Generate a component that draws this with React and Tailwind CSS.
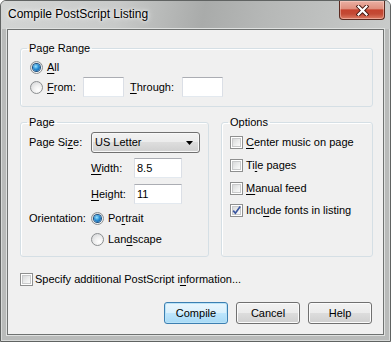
import React from "react";

const U = ({ children }) => <span className="underline underline-offset-[2px]">{children}</span>;

function Radio({ checked }) {
  return (
    <span className="relative inline-flex w-[13px] h-[13px] shrink-0 items-center justify-center rounded-full border border-[#8b8e90] bg-[radial-gradient(circle_at_65%_70%,#ffffff_0%,#f0f0f0_40%,#cfd1d3_100%)]">
      {checked && (
        <span className="w-[7px] h-[7px] rounded-full bg-[radial-gradient(circle_at_40%_35%,#9be4ff_0%,#2a8fd6_45%,#0c4e8e_100%)] shadow-[0_0_0_1px_#1b4f7f]" />
      )}
    </span>
  );
}

function Check({ checked }) {
  return (
    <span className="relative inline-flex w-[13px] h-[13px] shrink-0 items-center justify-center border border-[#8e8f8f] bg-white">
      <span className="w-[9px] h-[9px] border border-[#c8c9ca] bg-[linear-gradient(135deg,#d8d9da_0%,#eceded_55%,#fbfbfb_100%)] flex items-center justify-center">
        {checked && (
          <svg width="9" height="9" viewBox="0 0 9 9" className="overflow-visible">
            <path d="M1.2 4.6 L3.4 7.2 L8.2 0.6" fill="none" stroke="#3b57a0" strokeWidth="1.7" strokeLinejoin="miter" />
          </svg>
        )}
      </span>
    </span>
  );
}

function Field({ w, value }) {
  return (
    <div
      className="h-[20px] bg-white border border-[#e3e9ef] border-t-[#abadb3] border-l-[#dbdfe6] border-r-[#dbdfe6] flex items-center pl-[2px]"
      style={{ width: w }}
    >
      {value}
    </div>
  );
}

function Group({ title, className, inner, children }) {
  return (
    <fieldset className={"border border-[#d5dfe5] rounded-[3px] shadow-[inset_1px_1px_0_#fff] " + (className || "")}>
      <legend className="ml-[6px] px-[2px] leading-[13px]">{title}</legend>
      <div className={inner}>{children}</div>
    </fieldset>
  );
}

function Button({ children, def }) {
  return (
    <div
      className={
        "w-[64px] h-[22px] rounded-[3px] flex items-center justify-center " +
        (def
          ? "border border-[#3c7fb1] bg-[linear-gradient(#eaf6fd_0%,#d9f0fc_50%,#bee6fd_50%,#a7d9f5_100%)] shadow-[inset_0_0_0_1px_#b9e3f8]"
          : "border border-[#707070] bg-[linear-gradient(#f2f2f2_0%,#ebebeb_50%,#dddddd_50%,#cfcfcf_100%)] shadow-[inset_0_0_0_1px_#fbfbfb]")
      }
    >
      {children}
    </div>
  );
}

export default function App() {
  return (
    <div className="w-[391px] h-[342px] flex flex-col border border-[#606362] rounded-t-[6px] overflow-hidden bg-[#b9bbba] text-[11px] text-black font-['Liberation_Sans',Arial,sans-serif] shadow-[inset_0_0_0_1px_#d8dad9]">
      {/* title bar */}
      <div className="h-[28px] flex items-start bg-[linear-gradient(100deg,#d3d5d4_0%,#c8cac9_30%,#a9abaa_52%,#b6b8b7_68%,#c9cbca_100%)]">
        <span className="ml-[7px] mt-[6px] text-[12px] leading-[15px] [text-shadow:0_0_6px_#ffffff,0_0_3px_#ffffff]">
          Compile PostScript Listing
        </span>
        <div className="ml-auto mr-[5px] w-[46px] h-[19px] rounded-b-[4px] border border-t-0 border-[#5b2a20] bg-[linear-gradient(#eab0a3_0%,#df8f7e_42%,#c5432e_50%,#c34a35_72%,#dc7c64_100%)] shadow-[inset_0_0_0_1px_rgba(255,220,210,0.45)] flex items-center justify-center">
          <svg width="13" height="11" viewBox="0 0 13 11">
            <path d="M2.5 1.5 L10.5 9.5 M10.5 1.5 L2.5 9.5" stroke="#43170f" strokeWidth="4" strokeLinecap="square" />
            <path d="M2.5 1.5 L10.5 9.5 M10.5 1.5 L2.5 9.5" stroke="#ffffff" strokeWidth="2.2" strokeLinecap="square" />
          </svg>
        </div>
      </div>

      {/* client */}
      <div className="mx-[6px] mb-[6px] flex-1 border border-[#6f7271] shadow-[0_0_0_1px_#dfe1e0] bg-[#f0f0f0] pt-[12px] pl-[12px] pr-[10px] flex flex-col">
        <Group title="Page Range" inner="pl-[9px] pb-[9px]">
          <div className="mt-[4px] h-[16px] flex items-center gap-[4px]">
            <Radio checked />
            <span>
              <U>A</U>ll
            </span>
          </div>
          <div className="mt-[2px] h-[20px] flex items-center">
            <div className="w-[53px] flex items-center gap-[4px]">
              <Radio />
              <span>
                <U>F</U>rom:
              </span>
            </div>
            <Field w={41} />
            <span className="ml-[6px] w-[52px]">
              <U>T</U>hrough:
            </span>
            <Field w={41} />
          </div>
        </Group>

        <div className="mt-[9px] flex gap-[12px]">
          <Group title="Page" className="w-[189px]" inner="pl-[8px] pb-[9px]">
            <div className="mt-[3px] h-[21px] flex items-center">
              <span className="w-[62px]">
                Page Si<U>z</U>e:
              </span>
              <div className="w-[109px] h-[21px] rounded-[3px] border border-[#707070] bg-[linear-gradient(#f2f2f2_0%,#ebebeb_50%,#dddddd_50%,#cfcfcf_100%)] shadow-[inset_0_0_0_1px_#f8f8f8] flex items-center pl-[3px] pr-[6px]">
                <span className="flex-1">US Letter</span>
                <svg width="7" height="4" viewBox="0 0 7 4">
                  <path d="M0 0 H7 L3.5 4 Z" fill="#000" />
                </svg>
              </div>
            </div>
            <div className="mt-[5px] h-[20px] flex items-center pl-[62px]">
              <span className="w-[43px]">
                <U>W</U>idth:
              </span>
              <Field w={48} value="8.5" />
            </div>
            <div className="mt-[6px] h-[20px] flex items-center pl-[62px]">
              <span className="w-[43px]">
                <U>H</U>eight:
              </span>
              <Field w={48} value="11" />
            </div>
            <div className="mt-[6px] h-[16px] flex items-center">
              <span className="w-[62px]">Orientation:</span>
              <Radio checked />
              <span className="ml-[4px]">
                Po<U>r</U>trait
              </span>
            </div>
            <div className="mt-[5px] h-[16px] flex items-center pl-[62px]">
              <Radio />
              <span className="ml-[4px]">
                Lan<U>d</U>scape
              </span>
            </div>
          </Group>

          <Group title="Options" className="w-[152px]" inner="pl-[8px]">
            <div className="mt-[5px] h-[16px] flex items-center gap-[3px]">
              <Check />
              <span>
                <U>C</U>enter music on page
              </span>
            </div>
            <div className="mt-[7px] h-[16px] flex items-center gap-[3px]">
              <Check />
              <span>
                Ti<U>l</U>e pages
              </span>
            </div>
            <div className="mt-[7px] h-[16px] flex items-center gap-[3px]">
              <Check />
              <span>
                <U>M</U>anual feed
              </span>
            </div>
            <div className="mt-[6px] h-[16px] flex items-center gap-[3px]">
              <Check checked />
              <span>
                Incl<U>u</U>de fonts in listing
              </span>
            </div>
          </Group>
        </div>

        <div className="mt-[14px] h-[16px] flex items-center gap-[2px]">
          <Check />
          <span>
            Specify additional PostScript i<U>n</U>formation...
          </span>
        </div>

        <div className="mt-[15px] flex justify-end gap-[8px] pr-[1px]">
          <Button def>Compile</Button>
          <Button>Cancel</Button>
          <Button>Help</Button>
        </div>
      </div>
    </div>
  );
}
